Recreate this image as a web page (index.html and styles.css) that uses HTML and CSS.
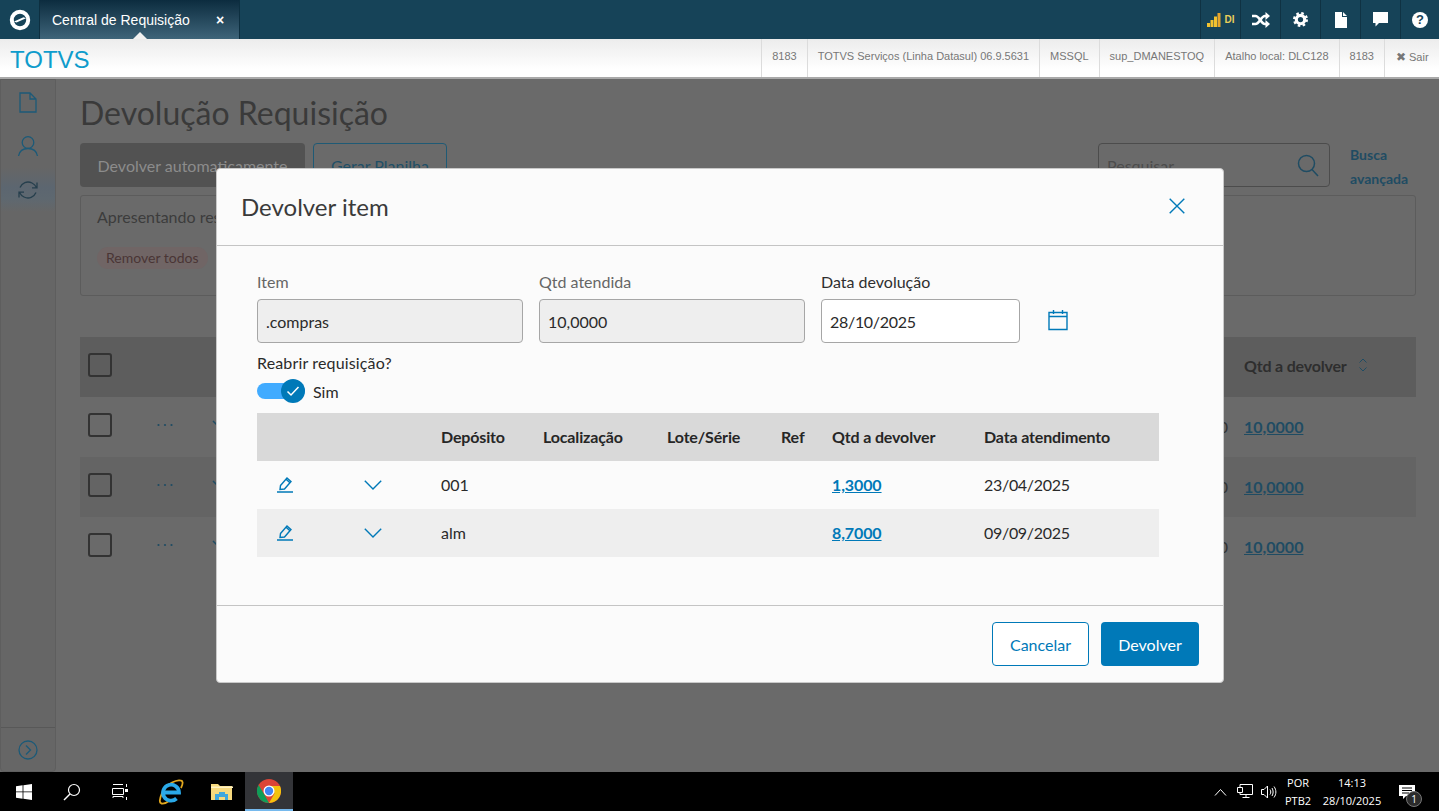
FILE: index.html
```html
<!DOCTYPE html>
<html lang="pt-BR">
<head>
<meta charset="utf-8">
<title>Central de Requisição</title>
<link rel="stylesheet" href="styles.css">
</head>
<body>
<div class="app">
  <header class="topbar">
    <div class="logo-cell">
      <svg width="22" height="22" viewBox="0 0 22 22"><circle cx="11" cy="11" r="8.200" fill="none" stroke="#fff" stroke-width="4"/><path d="M5 12.600 L14.500 8.200 L17 9.200 L7.500 13.600 Z" fill="#fff"/></svg>
    </div>
    <div class="tab">
      <span class="tab-title">Central de Requisição</span>
      <span class="tab-close">×</span>
      <span class="tab-notch"></span>
    </div>
    <div class="top-spacer"></div>
    <div class="top-cell">
      <svg width="14" height="14" viewBox="0 0 14 14"><rect x="0" y="10" width="3" height="4" fill="#f2c230"/><rect x="3.500" y="7" width="3" height="7" fill="#f2c230"/><rect x="7" y="3.500" width="3" height="10.500" fill="#f2c230"/><rect x="10.500" y="0" width="3" height="14" fill="#e8a52a"/></svg>
      <span class="signal-text">DI</span>
    </div>
    <div class="top-cell">
      <svg width="18" height="16" viewBox="0 0 18 16"><path d="M0 4 H3.500 C7.500 4 9 12 13 12 H15" fill="none" stroke="#fff" stroke-width="2.600"/><path d="M0 12 H3.500 C7.500 12 9 4 13 4 H15" fill="none" stroke="#fff" stroke-width="2.600"/><path d="M13.500 0 L18 4 L13.500 8 Z M13.500 8 L18 12 L13.500 16 Z" fill="#fff"/></svg>
    </div>
    <div class="top-cell">
      <svg width="15" height="15" viewBox="0 0 16 16"><circle cx="8" cy="8" r="4.500" fill="none" stroke="#fff" stroke-width="3.400"/><circle cx="8" cy="8" r="6.800" fill="none" stroke="#fff" stroke-width="2.400" stroke-dasharray="2.700 2.640"/></svg>
    </div>
    <div class="top-cell">
      <svg width="12" height="16" viewBox="0 0 12 16"><path d="M0 0 H7 V5 H12 V16 H0 Z M8 0 L12 4 H8 Z" fill="#fff"/></svg>
    </div>
    <div class="top-cell">
      <svg width="15" height="15" viewBox="0 0 15 15"><path d="M0 0 H15 V11 H6 L2.500 14.500 V11 H0 Z" fill="#fff"/></svg>
    </div>
    <div class="top-cell">
      <span class="help-badge">?</span>
    </div>
  </header>

  <div class="subbar">
    <div class="brand">TOTVS</div>
    <div class="info-cell">8183</div>
    <div class="info-cell">TOTVS Serviços (Linha Datasul) 06.9.5631</div>
    <div class="info-cell">MSSQL</div>
    <div class="info-cell">sup_DMANESTOQ</div>
    <div class="info-cell">Atalho local: DLC128</div>
    <div class="info-cell">8183</div>
    <div class="info-cell exit"><span class="exit-x">✖</span> Sair</div>
  </div>

  <div class="workspace">
    <aside class="sidebar">
      <div class="side-item">
        <svg width="18" height="21" viewBox="0 0 18 21" class="side-icon"><path d="M1 1 H11 L17 7 V20 H1 Z M11 1 V7 H17" /></svg>
      </div>
      <div class="side-item">
        <svg width="22" height="22" viewBox="0 0 22 22" class="side-icon"><circle cx="11" cy="7.500" r="5.800"/><path d="M1.500 21 C2.500 15.500 6 13.500 11 13.500 C16 13.500 19.500 15.500 20.500 21"/></svg>
      </div>
      <div class="side-item active">
        <svg width="22" height="22" viewBox="0 0 22 22" class="side-icon sync"><path d="M3 8.500 C5 4 10 1.500 15 4 C17 5 18.500 6.500 19.500 8.500 M20 3.500 V8.800 H15"/><path d="M19 13.500 C17 18 12 20.500 7 18 C5 17 3.500 15.500 2.500 13.500 M2 18.500 V13.200 H7"/></svg>
      </div>
      <div class="side-fill"></div>
      <div class="side-foot">
        <svg width="20" height="20" viewBox="0 0 20 20" class="side-icon"><circle cx="10" cy="10" r="9"/><path d="M8 5.500 L12.500 10 L8 14.500"/></svg>
      </div>
    </aside>

    <main class="page">
      <h1 class="page-title">Devolução Requisição</h1>
      <div class="toolbar">
        <button class="btn-auto">Devolver automaticamente</button>
        <button class="btn-sheet">Gerar Planilha</button>
        <div class="toolbar-gap"></div>
        <div class="search">
          <span class="search-ph">Pesquisar</span>
          <svg width="24" height="24" viewBox="0 0 24 24" class="dim-icon"><circle cx="10.500" cy="10.500" r="8"/><path d="M16 16.500 L22 23"/></svg>
        </div>
        <div class="adv-link">Busca avançada</div>
      </div>
      <section class="filter-panel">
        <div class="filter-text">Apresentando resultados filtrados por:</div>
        <span class="chip">Remover todos</span>
      </section>
      <section class="bg-table">
        <div class="bg-row head">
          <span class="box"></span><span></span><span></span><span></span>
          <span class="bg-qtd-head">Qtd a devolver
            <svg width="10" height="16" viewBox="0 0 10 16" class="dim-icon thin"><path d="M1.500 5.500 L5 2 L8.500 5.500 M1.500 10.500 L5 14 L8.500 10.500"/></svg>
          </span>
        </div>
        <div class="bg-row">
          <span class="box"></span>
          <svg width="16" height="4" viewBox="0 0 16 4" class="dots"><circle cx="1.500" cy="2" r="1.100"/><circle cx="8" cy="2" r="1.100"/><circle cx="14.500" cy="2" r="1.100"/></svg>
          <svg width="16" height="10" viewBox="0 0 16 10" class="dim-icon"><path d="M1 1 L8 8 L15 1"/></svg>
          <span class="bg-num">10,0000</span><a class="bg-link">10,0000</a>
        </div>
        <div class="bg-row odd">
          <span class="box"></span>
          <svg width="16" height="4" viewBox="0 0 16 4" class="dots"><circle cx="1.500" cy="2" r="1.100"/><circle cx="8" cy="2" r="1.100"/><circle cx="14.500" cy="2" r="1.100"/></svg>
          <svg width="16" height="10" viewBox="0 0 16 10" class="dim-icon"><path d="M1 1 L8 8 L15 1"/></svg>
          <span class="bg-num">10,0000</span><a class="bg-link">10,0000</a>
        </div>
        <div class="bg-row">
          <span class="box"></span>
          <svg width="16" height="4" viewBox="0 0 16 4" class="dots"><circle cx="1.500" cy="2" r="1.100"/><circle cx="8" cy="2" r="1.100"/><circle cx="14.500" cy="2" r="1.100"/></svg>
          <svg width="16" height="10" viewBox="0 0 16 10" class="dim-icon"><path d="M1 1 L8 8 L15 1"/></svg>
          <span class="bg-num">10,0000</span><a class="bg-link">10,0000</a>
        </div>
      </section>
    </main>
  </div>

  <footer class="taskbar">
    <div class="task-apps">
      <div class="task-cell c48">
        <svg width="16" height="16" viewBox="0 0 16 16"><path d="M0 2.300 L6.600 1.300 V7.500 H0 Z M7.400 1.200 L16 0 V7.500 H7.400 Z M0 8.300 H6.600 V14.700 L0 13.700 Z M7.400 8.300 H16 V16 L7.400 14.800 Z" fill="#fff"/></svg>
      </div>
      <div class="task-cell c48">
        <svg width="18" height="18" viewBox="0 0 18 18"><circle cx="11" cy="7" r="5.500" fill="none" stroke="#fff" stroke-width="1.200"/><path d="M7 11 L1 17" stroke="#fff" stroke-width="1.400"/></svg>
      </div>
      <div class="task-cell c48">
        <svg width="17" height="16" viewBox="0 0 17 16" fill="none" stroke="#fff"><path d="M1 .5 H11 M0.500 4.500 H11.500 V10.500 H0.500 Z M1 14 V12.500 H11 V14 M14.500 0 V3 M14.500 13 V16"/><rect x="13" y="5" width="3" height="3" fill="#fff" stroke="none"/></svg>
      </div>
      <div class="task-cell c54">
        <svg width="26" height="26" viewBox="0 0 26 26">
          <path d="M4 14 C6 9 10 5.500 14 3.500 C19 1 24 .5 24.500 3 C25 5 24 7 23 9 M4 14 C1.500 20 1 24 3.500 24.500 C6 25 9 23.500 11 22" fill="none" stroke="#e3a81e" stroke-width="1.800"/>
          <path d="M6.500 13.500 H21 A8 8 0 1 0 18.500 19.500" fill="none" stroke="#2aa9e8" stroke-width="3.800"/>
        </svg>
      </div>
      <div class="task-cell c47">
        <svg width="22" height="18" viewBox="0 0 22 18"><path d="M0 1 H7 L9 3 H21 V17 H0 Z" fill="#f6d97e"/><path d="M0 3.500 H22 V5 H0 Z" fill="#fff2c4"/><path d="M4 17 V11 H8 V9 H14 V11 H17 V17 H14 V14 H8 V17 Z" fill="#3fa7dd"/></svg>
      </div>
      <div class="task-cell chrome">
        <svg width="24" height="24" viewBox="0 0 24 24">
          <circle cx="12" cy="12" r="12" fill="#db4437"/>
          <path d="M1.600 6 L7 15 L12 24 A12 12 0 0 1 1.600 6 Z" fill="#0f9d58"/>
          <path d="M12 7 H23 A12 12 0 0 1 12 24 L17.500 14.500 Z" fill="#f4c20d"/>
          <circle cx="12" cy="12" r="5.500" fill="#fff"/>
          <circle cx="12" cy="12" r="4.200" fill="#4285f4"/>
        </svg>
      </div>
    </div>
    <div class="task-spacer"></div>
    <div class="tray">
      <svg width="13" height="8" viewBox="0 0 13 8" fill="none" stroke="#fff"><path d="M1 7.500 L6.500 1.500 L12 7.500"/></svg>
      <svg width="16" height="15" viewBox="0 0 16 15" fill="none" stroke="#fff"><path d="M3 .5 H15.500 V10.500 H3 M3 .5 V3 M.5 3.500 H5.500 V8.500 H.5 Z M3 8.500 V10.500 M9 10.500 V13.500 M5.500 13.500 H12.500"/></svg>
      <svg width="16" height="14" viewBox="0 0 16 14" fill="none" stroke="#fff"><path d="M0.500 4.500 H3 L6.500 1 V13 L3 9.500 H0.500 Z M9 4.500 C10 6 10 8 9 9.500 M11 3 C12.500 5.500 12.500 8.500 11 11 M13 1.500 C15.500 5 15.500 9 13 12.500"/></svg>
      <div class="tray-lang"><span>POR</span><span>PTB2</span></div>
      <div class="tray-clock"><span>14:13</span><span>28/10/2025</span></div>
      <div class="tray-note">
        <svg width="16" height="14" viewBox="0 0 16 14"><path d="M0 0 H16 V11 H7 L4 14 V11 H0 Z" fill="#fff"/><path d="M3 3 H13 M3 5.500 H13 M3 8 H10" stroke="#000" stroke-width="1"/></svg>
        <span class="note-badge">1</span>
      </div>
    </div>
  </footer>

  <div class="modal">
    <div class="modal-head">
      <h2 class="modal-title">Devolver item</h2>
      <svg width="16" height="16" viewBox="0 0 16 16" class="blue-icon"><path d="M.7 .7 L15.300 15.300 M15.300 .7 L.7 15.300"/></svg>
    </div>
    <div class="modal-body">
      <div class="form-row">
        <div class="field w266">
          <label class="muted">Item</label>
          <div class="input disabled">.compras</div>
        </div>
        <div class="field w266">
          <label class="muted">Qtd atendida</label>
          <div class="input disabled">10,0000</div>
        </div>
        <div class="field w199">
          <label>Data devolução</label>
          <div class="input date">28/10/2025</div>
        </div>
        <svg width="20" height="22" viewBox="0 0 20 22" class="blue-icon cal"><path d="M1 3.500 H19 V20.500 H1 Z M1 7.500 H19 M5.500 1 V5 M14.500 1 V5"/></svg>
      </div>
      <div class="reopen-label">Reabrir requisição?</div>
      <div class="switch-row">
        <span class="switch">
          <span class="switch-thumb">
            <svg width="14" height="12" viewBox="0 0 14 12" fill="none" stroke="#fff" stroke-width="1.500"><path d="M1.500 6.500 L5 10 L12.500 2"/></svg>
          </span>
        </span>
        <span>Sim</span>
      </div>
      <div class="grid-table">
        <div class="grid-row grid-head">
          <span></span><span></span><span>Depósito</span><span>Localização</span><span>Lote/Série</span><span>Ref</span><span>Qtd a devolver</span><span>Data atendimento</span>
        </div>
        <div class="grid-row body-row">
          <svg width="16" height="17" viewBox="0 0 16 17" class="blue-icon edit"><path d="M3.500 9.500 L10 2 L14 5.500 L7.500 13 L3 13.500 Z M9 3.200 L13 6.700 M0 16 H16"/></svg>
          <svg width="18" height="10" viewBox="0 0 18 10" class="blue-icon chev"><path d="M.8 .8 L9 9 L17.200 .8"/></svg>
          <span>001</span><span></span><span></span><span></span><a class="qty-link">1,3000</a><span class="date">23/04/2025</span>
        </div>
        <div class="grid-row body-row odd">
          <svg width="16" height="17" viewBox="0 0 16 17" class="blue-icon edit"><path d="M3.500 9.500 L10 2 L14 5.500 L7.500 13 L3 13.500 Z M9 3.200 L13 6.700 M0 16 H16"/></svg>
          <svg width="18" height="10" viewBox="0 0 18 10" class="blue-icon chev"><path d="M.8 .8 L9 9 L17.200 .8"/></svg>
          <span>alm</span><span></span><span></span><span></span><a class="qty-link">8,7000</a><span class="date">09/09/2025</span>
        </div>
      </div>
    </div>
    <div class="modal-foot">
      <button class="btn-cancel">Cancelar</button>
      <button class="btn-primary">Devolver</button>
    </div>
  </div>
</div>
</body>
</html>
```
FILE: styles.css
```css
* { box-sizing: border-box; }
html, body { margin: 0; padding: 0; height: 100%; overflow: hidden; }
body { font-family: Lato, "Open Sans", sans-serif; background: #6a6a6a; }
.app { position: relative; display: flex; flex-direction: column; width: 1439px; height: 811px; overflow: hidden; }

/* top bar */
.topbar { display: flex; height: 39px; background: #164358; flex: none; font-family: "Liberation Sans", Arial, sans-serif; }
.logo-cell { width: 40px; display: flex; align-items: center; justify-content: center; border-right: 1px solid #0d2f40; }
.tab { position: relative; width: 200px; display: flex; align-items: center; padding-left: 12px; background: linear-gradient(#0c2c3f, #3e6479); border-right: 1px solid #0d2f40; color: #fff; }
.tab-title { font-size: 14px; width: 164px; white-space: nowrap; }
.tab-close { font-size: 14px; font-weight: bold; }
.tab-notch { position: absolute; left: 93px; bottom: 0; border-left: 7px solid transparent; border-right: 7px solid transparent; border-bottom: 7px solid #f1f1f1; }
.top-spacer { flex: 1; }
.top-cell { width: 40px; display: flex; align-items: center; justify-content: center; border-left: 1px solid #0f3243; }
.top-cell:last-child { width: 39px; }
.signal-text { font-size: 10px; font-weight: bold; color: #e8cf5a; margin-left: 4px; }
.help-badge { width: 16px; height: 16px; border-radius: 50%; background: #fff; color: #164358; font-size: 13px; font-weight: bold; display: flex; align-items: center; justify-content: center; }

/* sub bar */
.subbar { display: flex; height: 40px; flex: none; background: linear-gradient(#ececec, #fff 80%); border-bottom: 2px solid #a9a9a9; font-family: "Liberation Sans", Arial, sans-serif; }
.brand { flex: 1; font-size: 24px; color: #0f9ccc; padding: 7px 0 0 10px; }
.info-cell { display: flex; align-items: center; padding: 0 10px 5px; font-size: 11px; color: #777; border-left: 1px solid #dcdcdc; height: 38px; }
.exit { width: 55px; padding: 0 0 3px 11px; gap: 3px; }
.exit-x { font-size: 12px; color: #777; }

/* workspace (dimmed behind the modal) */
.workspace { flex: 1; display: flex; background: #6a6a6a; min-height: 0; }
.sidebar { width: 56px; flex: none; display: flex; flex-direction: column; background: #666; border: 1px solid #5e5e5e; border-radius: 0 0 4px 4px; }
.side-item { height: 44px; display: flex; align-items: center; justify-content: center; }
.side-item.active { background: linear-gradient(#666, #5c6670 45%, #5e6870 70%, #666); }
.side-fill { flex: 1; }
.side-foot { height: 44px; border-top: 1px solid #585858; display: flex; align-items: center; justify-content: center; }
.side-icon { fill: none; stroke: #1c5a78; stroke-width: 1.300; }
.side-icon.sync { stroke: #263f4d; }
.page { flex: 1; padding: 14px 23px 0 24px; min-width: 0; }
.page-title { margin: 0; font-size: 32px; font-weight: 400; line-height: 40px; color: #3a3a3a; }
.toolbar { display: flex; align-items: stretch; height: 44px; margin-top: 10px; }
.btn-auto { width: 225px; border: 0; border-radius: 4px; background: #525252; color: #8c8c8c; font: 400 16px Lato, sans-serif; padding: 0; }
.btn-sheet { width: 134px; margin-left: 8px; border: 1px solid #1f5a75; border-radius: 4px; background: transparent; color: #1f4f66; font: 400 16px Lato, sans-serif; padding: 0; }
.toolbar-gap { flex: 1; }
.search { width: 232px; display: flex; align-items: center; justify-content: space-between; padding: 0 9px 0 8px; border: 1px solid #4c4c4c; border-radius: 4px; font-size: 16px; color: #4c4c4c; }
.search-ph { white-space: nowrap; }
.dim-icon { fill: none; stroke: #1f4c63; stroke-width: 1.500; flex: none; }
.dim-icon.thin { stroke-width: 1; margin-left: 11px; }
.adv-link { width: 66px; margin-left: 20px; font-size: 14px; font-weight: 700; color: #1f4c63; line-height: 24px; }
.filter-panel { height: 101px; margin-top: 8px; padding: 11px 16px; border: 1px solid #5c5c5c; border-radius: 3px; }
.filter-text { font-size: 16px; color: #3c3c3c; line-height: 20px; white-space: nowrap; }
.chip { display: inline-block; margin-top: 20px; padding: 0 9px; height: 22px; line-height: 22px; border-radius: 11px; background: #706565; color: #4a3535; font-size: 14px; }
.bg-table { margin-top: 41px; }
.bg-row { display: grid; grid-template-columns: 69px 55px auto 1fr 172px; align-items: center; height: 60px; padding: 0 0 4px 8px; }
.bg-row.head { background: #5d5d5d; }
.bg-row.odd { background: #646464; }
.box { width: 24px; height: 24px; border: 2px solid #333; border-radius: 3px; }
.dots { fill: #1f4c63; }
.bg-num { justify-self: end; padding: 2px 16px 0 0; color: #333; font-size: 16px; }
.bg-link { padding-top: 2px; color: #1f4c63; font-size: 16px; font-weight: 700; text-decoration: underline; }
.bg-qtd-head { display: flex; align-items: center; color: #2e2e2e; font-size: 16px; font-weight: 700; letter-spacing: -.2px; }

/* taskbar */
.taskbar { display: flex; flex: none; height: 39px; background: #000; color: #fff; font-family: "Open Sans", sans-serif; font-size: 11px; }
.task-apps { display: flex; }
.task-cell { display: flex; align-items: center; justify-content: center; }
.c48 { width: 48px; }
.c54 { width: 54px; }
.c47 { width: 47px; }
.chrome { width: 48px; background: #333438; border-bottom: 2px solid #76b9ed; }
.task-spacer { flex: 1; }
.tray { display: flex; align-items: center; }
.tray > svg:nth-child(1) { margin-right: 10px; }
.tray > svg:nth-child(2) { margin-right: 8px; }
.tray-lang { width: 40px; margin: 0 3px 0 1px; display: flex; flex-direction: column; align-items: center; line-height: 18px; }
.tray-clock { width: 62px; display: flex; flex-direction: column; align-items: center; line-height: 18px; }
.tray-note { position: relative; width: 56px; height: 39px; display: flex; align-items: center; padding-left: 16px; }
.note-badge { position: absolute; left: 23px; top: 19px; width: 16px; height: 16px; border-radius: 50%; background: #2b2b2b; border: 1px solid #777; font-size: 10px; display: flex; align-items: center; justify-content: center; }

/* modal */
.modal { position: absolute; left: 216px; top: 168px; width: 1008px; height: 515px; display: flex; flex-direction: column; background: #fbfbfb; border: 1px solid #c9c9c9; border-radius: 4px; color: #2a2a2a; font-size: 16px; }
.modal-head { height: 77px; flex: none; display: flex; align-items: center; justify-content: space-between; padding: 0 38px 2px 24px; border-bottom: 1px solid #c4c4c4; }
.modal-title { margin: 0; font-size: 24px; font-weight: 400; color: #3a3a3a; }
.blue-icon { fill: none; stroke: #0079b8; stroke-width: 1.400; flex: none; }
.modal-body { flex: 1; padding: 26px 64px 0 40px; display: flex; flex-direction: column; min-height: 0; }
.form-row { display: flex; align-items: flex-start; gap: 16px; }
.field { display: flex; flex-direction: column; }
.w266 { width: 266px; }
.w199 { width: 199px; }
.field label { height: 27px; line-height: 19px; color: #2f2f2f; }
.field label.muted { color: #666; }
.input { height: 44px; display: flex; align-items: center; padding: 0 8px; background: #fff; border: 1px solid #a6a6a6; border-radius: 4px; color: #2a2a2a; }
.input.disabled { background: #eee; }
.date { letter-spacing: -.3px; }
.cal { margin: 37px 0 0 12px; }
.reopen-label { margin-top: 9px; line-height: 21px; letter-spacing: .15px; }
.switch-row { display: flex; align-items: center; gap: 8px; height: 24px; margin-top: 6px; }
.switch { position: relative; width: 48px; height: 16px; border-radius: 8px; background: #41abff; }
.switch-thumb { position: absolute; right: 0; top: -4px; width: 24px; height: 24px; border-radius: 50%; background: #0079b8; display: flex; align-items: center; justify-content: center; }
.grid-table { margin-top: 10px; }
.grid-row { display: grid; grid-template-columns: 92px 92px 102px 124px 114px 51px 152px 175px; height: 48px; align-items: center; }
.body-row { padding-bottom: 2px; }
.grid-head { padding-bottom: 2px; background: #d9d9d9; font-weight: 700; color: #262626; letter-spacing: -.15px; }
.grid-row.odd { background: #eee; }
.edit { margin-left: 20px; }
.chev { margin: 2px 0 0 15px; }
.qty-link { color: #0079b8; font-weight: 700; text-decoration: underline; letter-spacing: -.1px; }
.modal-foot { height: 77px; flex: none; display: flex; justify-content: flex-end; align-items: flex-start; gap: 12px; padding: 16px 24px 0 0; border-top: 1px solid #c4c4c4; }
.btn-cancel, .btn-primary { height: 44px; border-radius: 4px; font: 400 16px Lato, sans-serif; padding: 0; }
.btn-cancel { width: 97px; border: 1px solid #0079b8; background: #fff; color: #0079b8; }
.btn-primary { width: 98px; border: 0; background: #0079b8; color: #fff; }
```
